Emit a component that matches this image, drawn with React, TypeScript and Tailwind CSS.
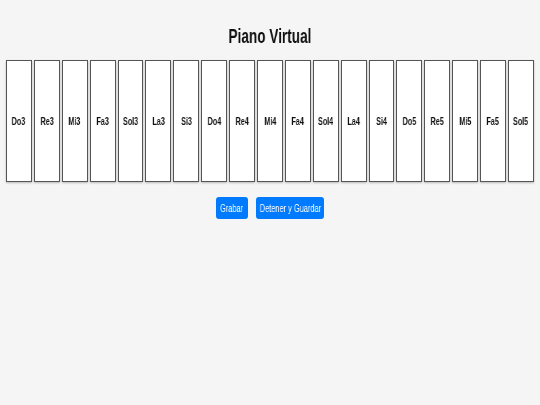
import React from "react";

const notes = ["Do3","Re3","Mi3","Fa3","Sol3","La3","Si3","Do4","Re4","Mi4","Fa4","Sol4","La4","Si4","Do5","Re5","Mi5","Fa5","Sol5"];

export default function App() {
  return (
    <div className="w-[540px] h-[405px] bg-[#f5f5f5] text-[#111] overflow-hidden" style={{ fontFamily: '"Liberation Sans", Arial, sans-serif' }}>
      <h1 className="flex justify-center font-bold text-[20px] leading-[24px] pt-[24px] pb-[12px] text-[#111]">
        <span className="inline-block scale-x-[0.68] [will-change:transform]">Piano Virtual</span>
      </h1>
      <div className="flex px-[5px]">
        {notes.map((n) => (
          <div key={n} className="flex-1 mx-px h-[122px] bg-white border border-[#555] shadow-[0_1px_2px_rgba(0,0,0,0.25)] flex items-center justify-center text-[10px] font-bold">
            <span className="inline-block scale-x-[0.72] [will-change:transform]">{n}</span>
          </div>
        ))}
      </div>
      <div className="flex justify-center gap-[8px] mt-[15px]">
        <button className="bg-[#007bff] text-white text-[10px] w-[32px] h-[22px] rounded-[3px] flex items-center justify-center whitespace-nowrap">
          <span className="inline-block scale-x-[0.74] [will-change:transform]">Grabar</span>
        </button>
        <button className="bg-[#007bff] text-white text-[10px] w-[68px] h-[22px] rounded-[3px] flex items-center justify-center whitespace-nowrap">
          <span className="inline-block scale-x-[0.74] [will-change:transform]">Detener y Guardar</span>
        </button>
      </div>
    </div>
  );
}
